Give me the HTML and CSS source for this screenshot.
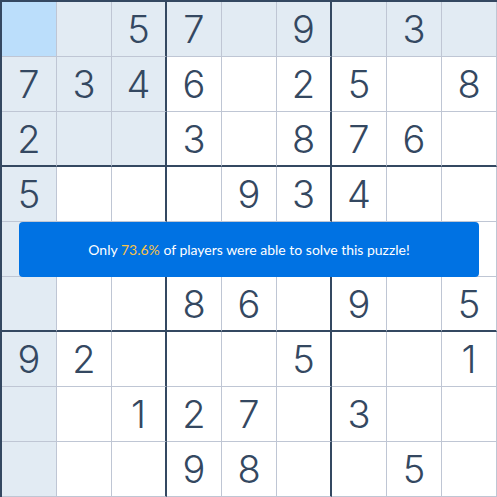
FILE: index.html
```html
<!DOCTYPE html>
<html>
<head>
<meta charset="utf-8">
<link rel="stylesheet" href="styles.css">
</head>
<body>
<div class="board">
  <div class="grid">
    <div class="cell sel"></div><div class="cell hl"></div><div class="cell hl">5</div><div class="cell hl">7</div><div class="cell hl"></div><div class="cell hl">9</div><div class="cell hl"></div><div class="cell hl">3</div><div class="cell hl"></div>
    <div class="cell hl">7</div><div class="cell hl">3</div><div class="cell hl">4</div><div class="cell">6</div><div class="cell"></div><div class="cell">2</div><div class="cell">5</div><div class="cell"></div><div class="cell">8</div>
    <div class="cell hl">2</div><div class="cell hl"></div><div class="cell hl"></div><div class="cell">3</div><div class="cell"></div><div class="cell">8</div><div class="cell">7</div><div class="cell">6</div><div class="cell"></div>
    <div class="cell hl">5</div><div class="cell"></div><div class="cell"></div><div class="cell"></div><div class="cell">9</div><div class="cell">3</div><div class="cell">4</div><div class="cell"></div><div class="cell"></div>
    <div class="cell hl"></div><div class="cell"></div><div class="cell"></div><div class="cell"></div><div class="cell"></div><div class="cell"></div><div class="cell"></div><div class="cell"></div><div class="cell"></div>
    <div class="cell hl"></div><div class="cell"></div><div class="cell"></div><div class="cell">8</div><div class="cell">6</div><div class="cell"></div><div class="cell">9</div><div class="cell"></div><div class="cell">5</div>
    <div class="cell hl">9</div><div class="cell">2</div><div class="cell"></div><div class="cell"></div><div class="cell"></div><div class="cell">5</div><div class="cell"></div><div class="cell"></div><div class="cell">1</div>
    <div class="cell hl"></div><div class="cell"></div><div class="cell">1</div><div class="cell">2</div><div class="cell">7</div><div class="cell"></div><div class="cell">3</div><div class="cell"></div><div class="cell"></div>
    <div class="cell hl"></div><div class="cell"></div><div class="cell"></div><div class="cell">9</div><div class="cell">8</div><div class="cell"></div><div class="cell"></div><div class="cell">5</div><div class="cell"></div>
  </div>
  <div class="toast"><p class="msg">Only <span class="pct">73.6%</span> of players were able to solve this puzzle!</p></div>
</div>
</body>
</html>
```
FILE: styles.css
```css
html, body {
  margin: 0;
  padding: 0;
  background: #ffffff;
  overflow: hidden;
}
.board {
  position: relative;
  width: 497px;
  height: 497px;
}
.grid {
  display: grid;
  grid-template-columns: repeat(9, 55px);
  grid-template-rows: repeat(9, 55px);
  border-top: 2px solid #344861;
  border-left: 2px solid #344861;
  width: 497px;
  box-sizing: border-box;
}
.cell {
  box-sizing: border-box;
  border-right: 1px solid #bfc6d4;
  border-bottom: 1px solid #bfc6d4;
  display: flex;
  align-items: center;
  justify-content: center;
  font-family: "Inter", "Liberation Sans", sans-serif;
  font-weight: 300;
  font-size: 38px;
  color: #344861;
  background: #ffffff;
}
.cell:nth-child(9n+3),
.cell:nth-child(9n+6) {
  border-right: 2px solid #344861;
}
.cell:nth-child(n+19):nth-child(-n+27),
.cell:nth-child(n+46):nth-child(-n+54) {
  border-bottom: 2px solid #344861;
}
.cell.hl {
  background: #e2ebf3;
}
.cell.sel {
  background: #bbdefb;
}
.toast {
  position: absolute;
  left: 19px;
  top: 222px;
  width: 460px;
  height: 55px;
  background: #0072e3;
  border-radius: 4px;
  display: flex;
  align-items: center;
  justify-content: center;
}
.msg {
  margin: 0;
  color: #ffffff;
  font-family: "Lato", "Liberation Sans", sans-serif;
  font-size: 14px;
  text-align: center;
}
.pct {
  color: #f8c348;
}
```
